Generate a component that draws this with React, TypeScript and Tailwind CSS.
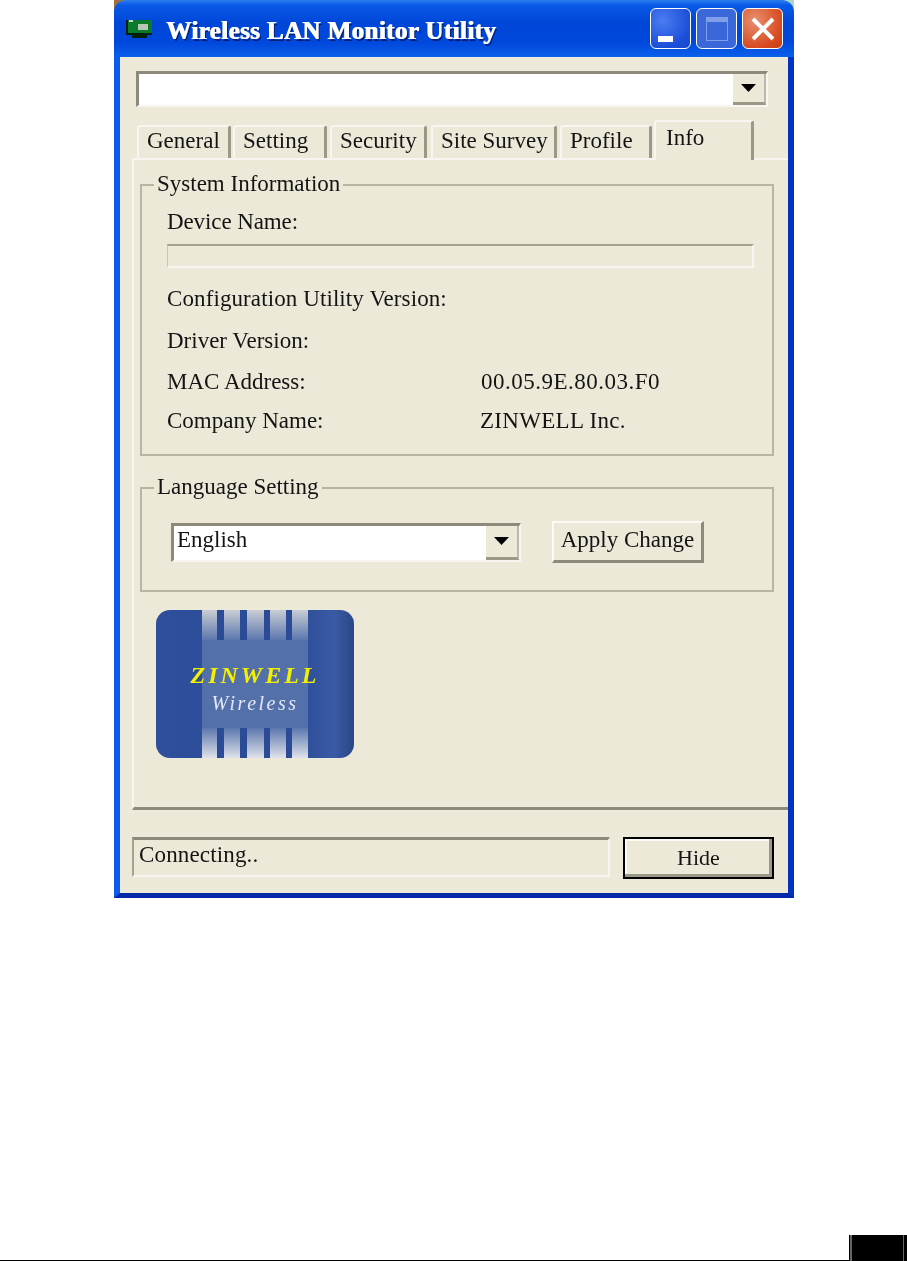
import React from 'react';

const Arrow = () => (
  <svg width="15" height="8" viewBox="0 0 15 8">
    <path d="M0 0h15L7.5 8z" fill="#000" />
  </svg>
);

const Combo = ({ text, className }: { text?: string; className: string }) => (
  <div className={`flex items-stretch border-t-[3px] border-l-[3px] border-t-[#8d8a7b] border-l-[#8d8a7b] border-b-2 border-r-2 border-b-[#f7f6f0] border-r-[#f7f6f0] bg-white ${className}`}>
    <span className="-mt-px flex-1 pl-[3px] leading-[30px]">{text}</span>
    <div className="flex w-[33px] items-center justify-center border-r-2 border-b-[3px] border-r-[#bcb9a8] border-b-[#9b9888] bg-[#ece9d8]">
      <Arrow />
    </div>
  </div>
);

const tabs = [
  { label: 'General', w: 'w-[94px]', gap: 'mr-[2px]' },
  { label: 'Setting', w: 'w-[94px]', gap: 'mr-[3px]' },
  { label: 'Security', w: 'w-[97px]', gap: 'mr-[4px]' },
  { label: 'Site Survey', w: 'w-[126px]', gap: 'mr-[3px]' },
  { label: 'Profile', w: 'w-[92px]', gap: 'mr-[2px]' },
];

const Row = ({ label, labelClass, value, valueClass, className }: { label: string; labelClass?: string; value?: string; valueClass?: string; className: string }) => (
  <div className={`flex h-[30px] items-center ${className}`}>
    <span className={`w-[314px] shrink-0 whitespace-nowrap ${labelClass}`}>{label}</span>
    {value && <span className={`whitespace-nowrap ${valueClass}`}>{value}</span>}
  </div>
);

const GroupBox = ({ title, className, children }: { title: string; className: string; children: React.ReactNode }) => (
  <div className={`mr-[14px] border-2 border-[#b8b5a3] ${className}`}>
    <div className="relative -mt-[14px] ml-[12px] h-[24px] w-fit bg-[#ece9d8] px-[3px] leading-[24px]">{title}</div>
    {children}
  </div>
);

const Stripes = ({ className }: { className: string }) => (
  <div className={`flex h-[30px] justify-between ${className}`}>
    <span className="ml-[15px] w-[7px] bg-[#2c4b97]" />
    <span className="w-[7px] bg-[#2c4b97]" />
    <span className="w-[6px] bg-[#2c4b97]" />
    <span className="mr-[16px] w-[6px] bg-[#2c4b97]" />
  </div>
);

const Logo = () => (
  <div className="ml-[16px] mt-[18px] flex h-[148px] w-[198px] overflow-hidden rounded-[14px] bg-[linear-gradient(90deg,#2f4f9c_0%,#2a4b98_70%,#3a5aa4_90%,#2a4688_100%)]">
    <div className="ml-[46px] flex w-[106px] flex-col bg-[#5470aa]">
      <Stripes className="bg-[linear-gradient(180deg,#c9cdd3,#5c77ae)]" />
      <div className="flex flex-1 flex-col items-center">
        <span className="mt-[22px] whitespace-nowrap text-[24px] leading-[26px] font-bold italic tracking-[3px] text-[#f5f000]">ZINWELL</span>
        <span className="mt-[2px] whitespace-nowrap text-[20px] leading-[26px] italic tracking-[2.5px] text-[#e4e8f2]">Wireless</span>
      </div>
      <Stripes className="bg-[linear-gradient(0deg,#dfe2ea,#5c77ae)]" />
    </div>
  </div>
);

const TitleIcon = () => (
  <svg width="26" height="20" viewBox="0 0 26 20" className="mt-[1px] shrink-0">
    <rect x="0" y="1" width="26" height="15" fill="#03200c" />
    <rect x="2" y="1" width="24" height="13" fill="#0b7a2a" />
    <rect x="6" y="15" width="15" height="4" fill="#03200c" />
    <rect x="12" y="5" width="10" height="6" fill="#b8c8b8" />
    <rect x="3" y="1" width="4" height="2" fill="#c8d8c8" />
  </svg>
);

const WinButton = ({ className, children }: { className: string; children: React.ReactNode }) => (
  <div className={`flex h-[41px] w-[41px] items-center justify-center rounded-[6px] border border-white ${className}`}>{children}</div>
);

export default function App() {
  return (
    <div className="h-[1261px] w-[907px] overflow-hidden bg-white text-[23px] text-[#141414] [font-family:'Liberation_Serif',serif]">
      <div className="ml-[114px] flex h-[898px] w-[680px] flex-col bg-[linear-gradient(90deg,#a5703f_50%,#a8d8c8_50%)] blur-[0.5px]">
        <div className="flex h-[57px] items-center rounded-t-[12px] bg-[linear-gradient(180deg,#2a7ff0_0%,#0a5ae6_9%,#0046d8_40%,#0048dc_75%,#0a60ea_100%)] pl-[12px] pr-[11px]">
          <TitleIcon />
          <span className="ml-[14px] mt-[4px] flex-1 whitespace-nowrap text-[25px] font-bold tracking-[0.4px] text-white [text-shadow:1px_0_0_#fff,2px_2px_0_#0a1f70]">Wireless LAN Monitor Utility</span>
          <div className="flex gap-[5px]">
            <WinButton className="bg-[radial-gradient(circle_at_30%_30%,#4a7cf0,#1c4fd8_70%,#1a48c8)]">
              <span className="mt-[20px] mr-[10px] h-[6px] w-[15px] bg-white" />
            </WinButton>
            <WinButton className="border-[#7f9fe8] bg-[#3a68d8]">
              <span className="h-[24px] w-[22px] border border-[#7f9fe8] border-t-[5px]" />
            </WinButton>
            <WinButton className="bg-[radial-gradient(circle_at_30%_30%,#e89070,#d84a20_70%,#c83c10)]">
              <svg width="26" height="26" viewBox="0 0 26 26">
                <path d="M3 3l20 20M23 3L3 23" stroke="#fff" strokeWidth="4" />
              </svg>
            </WinButton>
          </div>
        </div>

        <div className="flex flex-1 flex-col border-x-[6px] border-b-[5px] border-l-[#0a5cec] border-r-[#0034c0] border-b-[#0028a8] bg-[#ece9d8]">
          <Combo className="ml-[16px] mt-[14px] h-[36px] w-[632px]" />

          <div className="relative ml-[17px] mt-[13px] flex h-[38px] items-end">
            {tabs.map((t) => (
              <div key={t.label} className={`flex h-[33px] items-center whitespace-nowrap rounded-t-[3px] border-t-2 border-l-2 border-r-[3px] border-t-[#f7f6f0] border-l-[#f7f6f0] border-r-[#9b9888] pb-[2px] pl-[8px] ${t.w} ${t.gap}`}>{t.label}</div>
            ))}
            <div className="relative z-10 -mb-[2px] h-[40px] w-[100px] rounded-t-[3px] border-t-2 border-l-2 border-r-[3px] border-t-[#f7f6f0] border-l-[#f7f6f0] border-r-[#9b9888] bg-[#ece9d8] pl-[10px] leading-[32px]">Info</div>
          </div>

          <div className="ml-[12px] flex h-[652px] flex-col border-t-2 border-l-2 border-b-[3px] border-t-[#f7f6f0] border-l-[#f7f6f0] border-b-[#8d8a7b] pl-[6px] pt-[24px]">
            <GroupBox title="System Information" className="h-[272px]">
              <div className="pl-[25px]">
                <Row label="Device Name:" labelClass="-tracking-[0.1px]" className="mt-[11px]" />
                <div className="mr-[18px] mt-[7px] h-[24px] border-t-2 border-l border-t-[#a5a291] border-l-[#c8c5b4] border-b-2 border-r-2 border-b-[#f7f6f0] border-r-[#f7f6f0]" />
                <Row label="Configuration Utility Version:" labelClass="tracking-[0.1px]" className="mt-[16px]" />
                <Row label="Driver Version:" className="mt-[12px]" />
                <Row label="MAC Address:" value="00.05.9E.80.03.F0" valueClass="tracking-[0.5px]" className="mt-[11px]" />
                <Row label="Company Name:" value="ZINWELL Inc." valueClass="-ml-[1px] tracking-[0.3px]" className="mt-[9px]" />
              </div>
            </GroupBox>

            <GroupBox title="Language Setting" className="mt-[31px] h-[105px]">
              <div className="ml-[29px] mt-[22px] flex items-center">
                <Combo text="English" className="h-[39px] w-[350px]" />
                <div className="ml-[31px] flex h-[42px] w-[152px] items-center justify-center border-t-2 border-l-2 border-t-[#fbfaf5] border-l-[#fbfaf5] border-b-[3px] border-r-[3px] border-b-[#8d8a7b] border-r-[#8d8a7b] pb-[3px]">Apply Change</div>
              </div>
            </GroupBox>

            <Logo />
          </div>

          <div className="ml-[12px] mt-[27px] flex items-start">
            <div className="h-[40px] w-[478px] border-t-[3px] border-l-2 border-t-[#8d8a7b] border-l-[#a5a291] border-b-2 border-r-2 border-b-[#f7f6f0] border-r-[#f7f6f0] pl-[5px] leading-[30px] tracking-[0.15px]">Connecting..</div>
            <div className="ml-[13px] flex h-[42px] w-[151px] items-center justify-center border-2 border-black pb-[2px] text-[22px] shadow-[inset_-3px_-3px_0_#9b9888,inset_2px_2px_0_#fbfaf5]">Hide</div>
          </div>
        </div>
      </div>

      <div className="mt-[337px] flex h-[26px] items-end">
        <div className="h-px w-[849px] bg-black" />
        <div className="flex h-[26px] w-[58px] justify-between bg-black pl-[1px] pr-[3px]">
          <span className="w-[2px] bg-[#666]" />
          <span className="w-px bg-[#666]" />
        </div>
      </div>
    </div>
  );
}
